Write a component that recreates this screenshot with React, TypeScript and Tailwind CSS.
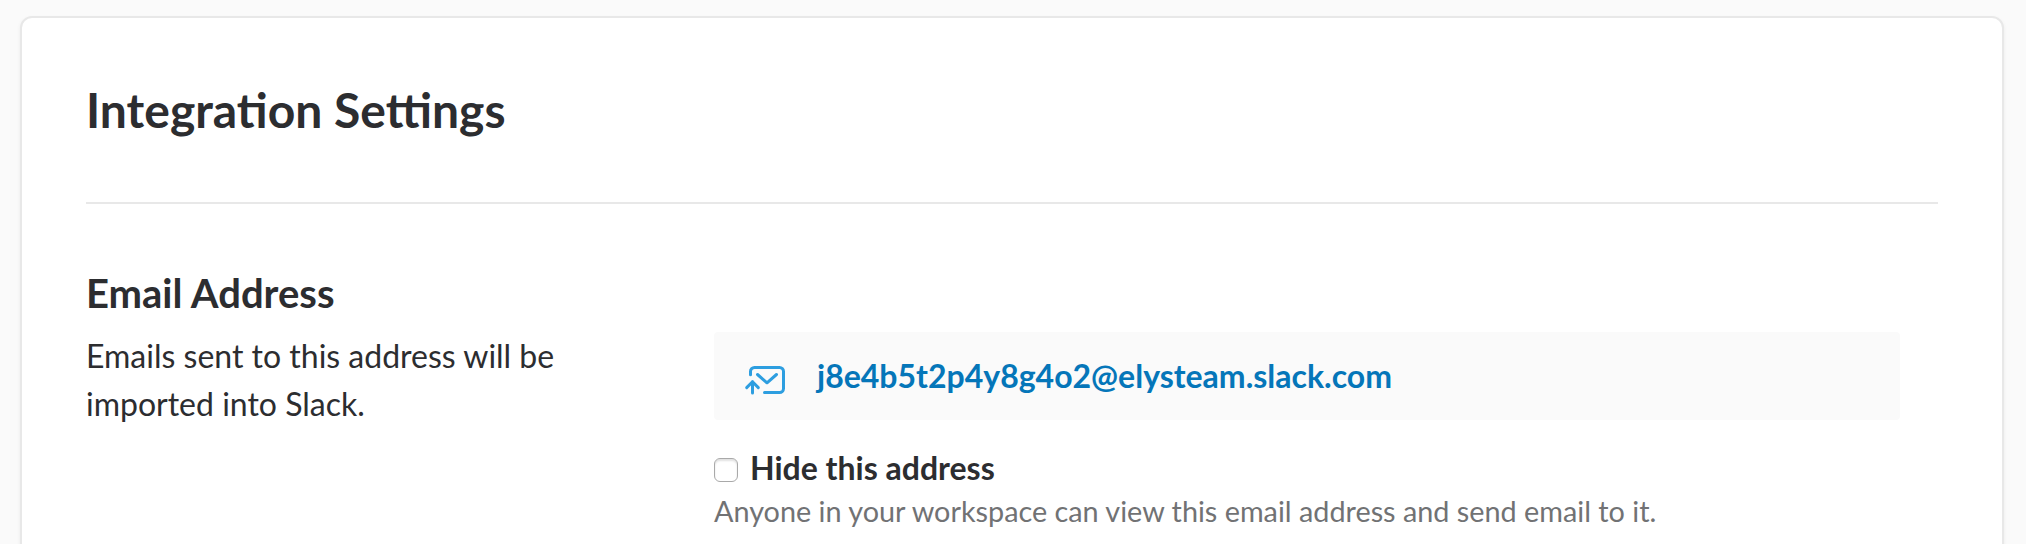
function MailInIcon() {
  return (
    <svg
      width="44"
      height="32"
      viewBox="0 0 44 32"
      fill="none"
      stroke="#2d9ee0"
      strokeWidth="3"
      strokeLinecap="round"
      strokeLinejoin="round"
      className="mt-2 shrink-0"
    >
      <path d="M6.500 10.800V7.500a4 4 0 0 1 4-4h25a4 4 0 0 1 4 4v17a4 4 0 0 1-4 4H20.500" />
      <path d="M13.500 10.500 23 18.800l9.500-8.300" />
      <path d="M8.500 29V17.500M2.700 23.600l5.800-5.800 5.800 5.800" />
    </svg>
  );
}

export default function App() {
  return (
    <div className="h-[544px] overflow-hidden bg-[#fafafa] pt-4 pr-[22px] pl-5 font-[Lato,sans-serif] text-[#2c2d30]">
      <main className="h-[600px] rounded-[12px] border-2 border-[#e8e8e8] bg-white px-16 shadow-[0_2px_4px_rgba(0,0,0,0.06)]">
        <h1 className="border-b-2 border-[#e8e8e8] pt-[62px] pb-[62px] text-[48px] leading-[60px] font-bold">
          Integration Settings
        </h1>
        <div className="flex">
          <section className="w-[628px] shrink-0 pt-[65px]">
            <h2 className="text-[40px] leading-[48px] font-bold">Email Address</h2>
            <p className="mt-[15px] w-[500px] text-[32px] leading-[48px]">
              Emails sent to this address will be imported into Slack.
            </p>
          </section>
          <section className="w-[1186px] pt-32">
            <div className="flex h-[88px] items-center rounded-[4px] bg-[#fafafa] pl-[30px]">
              <MailInIcon />
              <a className="ml-[29px] text-[32px] leading-[48px] font-bold text-[#0576b9]">
                j8e4b5t2p4y8g4o2@elysteam.slack.com
              </a>
            </div>
            <label className="mt-6 flex items-center">
              <input
                type="checkbox"
                className="mt-1 size-6 shrink-0 appearance-none rounded-[6px] border border-[#a9a9a9] bg-white shadow-[inset_0_2px_2px_rgba(0,0,0,0.12)]"
              />
              <span className="ml-3 text-[32px] leading-[48px] font-bold">Hide this address</span>
            </label>
            <p className="-mt-0.5 text-[28.8px] leading-[42px] text-[#717274]">
              Anyone in your workspace can view this email address and send email to it.
            </p>
          </section>
        </div>
      </main>
    </div>
  );
}
